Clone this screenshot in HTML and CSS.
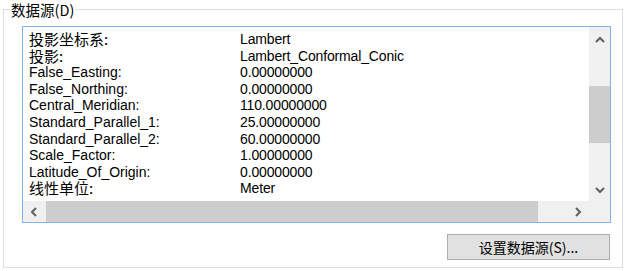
FILE: index.html
```html
<!DOCTYPE html>
<html lang="zh">
<head>
<meta charset="utf-8">
<link rel="stylesheet" href="styles.css">
</head>
<body>
<div class="group">
  <div class="title">数据源(D)</div>
  <div class="listbox">
    <div class="content">
      <div class="rows">
        <span class="k zh">投影坐标系:</span><span class="v">Lambert</span>
        <span class="k zh">投影:</span><span class="v">Lambert_Conformal_Conic</span>
        <span class="k">False_Easting:</span><span class="v">0.00000000</span>
        <span class="k">False_Northing:</span><span class="v">0.00000000</span>
        <span class="k">Central_Meridian:</span><span class="v">110.00000000</span>
        <span class="k">Standard_Parallel_1:</span><span class="v">25.00000000</span>
        <span class="k">Standard_Parallel_2:</span><span class="v">60.00000000</span>
        <span class="k">Scale_Factor:</span><span class="v">1.00000000</span>
        <span class="k">Latitude_Of_Origin:</span><span class="v">0.00000000</span>
        <span class="k zh">线性单位:</span><span class="v">Meter</span>
      </div>
    </div>
    <div class="vscroll">
      <div class="sbtn up"><svg width="10" height="7" viewBox="0 0 10 7"><path d="M1 6 L5 2 L9 6" fill="none" stroke="#606060" stroke-width="2"/></svg></div>
      <div class="vtrack"><div class="vthumb"></div></div>
      <div class="sbtn"><svg width="10" height="7" viewBox="0 0 10 7"><path d="M1 1 L5 5 L9 1" fill="none" stroke="#606060" stroke-width="2"/></svg></div>
    </div>
    <div class="hscroll">
      <div class="sbtn"><svg width="7" height="10" viewBox="0 0 7 10"><path d="M6 1 L2 5 L6 9" fill="none" stroke="#606060" stroke-width="2"/></svg></div>
      <div class="htrack"><div class="hthumb"></div></div>
      <div class="sbtn"><svg width="7" height="10" viewBox="0 0 7 10"><path d="M1 1 L5 5 L1 9" fill="none" stroke="#606060" stroke-width="2"/></svg></div>
    </div>
    <div class="corner"></div>
  </div>
  <div class="actions">
    <button class="btn">设置数据源(S)...</button>
  </div>
</div>
</body>
</html>
```
FILE: styles.css
```css
html, body {
  margin: 0;
  padding: 0;
  background: #ffffff;
}
body {
  padding: 9px 2px 0 3px;
  font-family: "Liberation Sans", "Noto Sans CJK SC", sans-serif;
  font-size: 14px;
  color: #000;
}
.group {
  position: relative;
  border: 1px solid #dcdcdc;
  height: 259px;
  display: flex;
  flex-direction: column;
  padding: 16px 11px 0 18px;
  box-sizing: border-box;
}
.title {
  position: absolute;
  top: -9px;
  left: 5px;
  padding: 0 2px 0 2px;
  background: #fff;
  font-family: "Noto Sans CJK SC", sans-serif;
  font-size: 14.5px;
  line-height: 18px;
  color: #000;
}
.listbox {
  border: 1px solid #7eb4ea;
  height: 197px;
  box-sizing: border-box;
  display: grid;
  grid-template-columns: 1fr 21px;
  grid-template-rows: 1fr 21px;
  background: #fff;
}
.content {
  overflow: hidden;
  padding: 4px 0 0 6px;
}
.rows {
  display: grid;
  grid-template-columns: 211px auto;
  grid-auto-rows: 16.6px;
  line-height: 16.6px;
  white-space: nowrap;
}
.v {
  letter-spacing: -0.15px;
}
.zh {
  font-family: "Noto Sans CJK SC", sans-serif;
  font-size: 15px;
}
.vscroll {
  background: #f0f0f0;
  display: flex;
  flex-direction: column;
}
.hscroll {
  background: #f0f0f0;
  display: flex;
}
.corner {
  background: #f0f0f0;
}
.sbtn {
  flex: 0 0 21px;
  width: 21px;
  height: 21px;
  display: flex;
  align-items: center;
  justify-content: center;
}
.sbtn.up {
  padding-top: 4px;
  box-sizing: border-box;
}
.vtrack {
  flex: 1;
  padding-top: 38px;
}
.vthumb {
  height: 57px;
  background: #cdcdcd;
}
.htrack {
  flex: 1;
  padding-left: 2px;
}
.hthumb {
  width: 492px;
  height: 100%;
  background: #cdcdcd;
}
.actions {
  display: flex;
  justify-content: flex-end;
  padding-top: 11px;
}
.btn {
  width: 163px;
  height: 26px;
  border: 1px solid #adadad;
  background: #e1e1e1;
  font-family: "Noto Sans CJK SC", sans-serif;
  font-size: 14px;
  color: #000;
  padding: 0;
  margin-right: 1px;
}
```
